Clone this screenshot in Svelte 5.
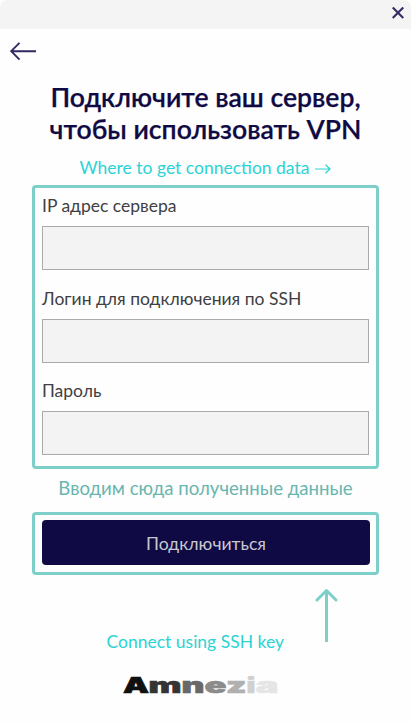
<script>
  let fields = $state([
    { id: 'ip', label: 'IP адрес сервера', type: 'text', value: '' },
    { id: 'login', label: 'Логин для подключения по SSH', type: 'text', value: '' },
    { id: 'password', label: 'Пароль', type: 'password', value: '' }
  ]);

  const brand = [
    { ch: 'A', x: 1, w: 26, color: '#101010' },
    { ch: 'm', x: 26.5, w: 33, color: '#343434' },
    { ch: 'n', x: 59.5, w: 23, color: '#686868' },
    { ch: 'e', x: 82.5, w: 22, color: '#8b8b8b' },
    { ch: 'z', x: 104, w: 20.5, color: '#b0b0b0' },
    { ch: 'i', x: 124.5, w: 9, color: '#d0d0d0' },
    { ch: 'a', x: 133.5, w: 23, color: '#e5e5e5' }
  ];
</script>

<div class="window">
  <header>
    <button class="close" aria-label="Close">
      <svg width="12" height="12" viewBox="0 0 12 12"><path d="M.7 .5 11.3 11M11.3 .5 .7 11" fill="none" stroke="#342c66" stroke-width="2.2" /></svg>
    </button>
  </header>
  <button class="back" aria-label="Back">
    <svg width="27" height="20" viewBox="0 0 27 20"><path d="M26 10.2H1.5M9.5 1.8 1.2 10.2 9.5 18.6" fill="none" stroke="#31295f" stroke-width="1.9" /></svg>
  </button>
  <h1><span>Подключите ваш сервер,</span><span>чтобы использовать VPN</span></h1>
  <a class="where" href="#help">Where to get connection data
    <svg width="16" height="10" viewBox="0 0 16 10"><path d="M0 5H15M10.5 .7 15 5 10.5 9.3" fill="none" stroke="#2bd3d4" stroke-width="1.2" /></svg>
  </a>
  <form class="frame fields">
    {#each fields as field (field.id)}
      <div class="field">
        <label for={field.id}>{field.label}</label>
        <input id={field.id} type={field.type} bind:value={field.value} />
      </div>
    {/each}
  </form>
  <p class="note">Вводим сюда полученные данные</p>
  <div class="frame action">
    <button class="connect">Подключиться</button>
  </div>
  <div class="pointer">
    <svg width="24" height="54" viewBox="0 0 24 54"><path d="M12.5 54V2" fill="none" stroke="#7dcfca" stroke-width="3" /><path d="M3 12 12.5 2.5 22 12" fill="none" stroke="#7dcfca" stroke-width="3" stroke-linecap="round" stroke-linejoin="round" /></svg>
  </div>
  <a class="ssh" href="#key">Connect using SSH key</a>
  <svg class="brand" width="156" height="20" viewBox="0 0 156 20">
    {#each brand as l}
      <text x={l.x} y="17.3" textLength={l.w} lengthAdjust="spacingAndGlyphs" fill={l.color} stroke={l.color}>{l.ch}</text>
    {/each}
  </svg>
</div>

<style>
  :global(body) { background: #fff; }
  .window { width: 411px; height: 723px; display: flex; flex-direction: column; background: #fefefe; font-family: Lato, "Noto Sans", sans-serif; overflow: hidden; }
  .window * { box-sizing: border-box; }
  button { border: 0; padding: 0; background: none; font-family: inherit; }
  svg { display: block; }
  header { height: 29px; flex: none; background: #f4f4f4; border-radius: 7px 7px 0 0; display: flex; justify-content: flex-end; padding: 7px 7px 0 0; }
  .close { height: 12px; }
  .back { margin: 12px 0 0 9.5px; width: 27px; height: 20px; }
  h1 { margin: 20px 0 0; height: 65px; font-size: 26.6px; line-height: 32px; font-weight: 600; color: #100a44; -webkit-text-stroke: .25px #100a44; display: flex; flex-direction: column; align-items: center; white-space: nowrap; }
  a { text-decoration: none; color: #2bd3d4; white-space: nowrap; }
  .where { align-self: center; margin-top: 10px; height: 24px; line-height: 24px; font-size: 17.5px; display: flex; align-items: center; gap: 6px; }
  .where svg { margin-top: 2px; }
  .frame { border: 3px solid #7dcfca; border-radius: 4px; width: 347px; margin-left: 32px; }
  .fields { margin-top: 5px; height: 284px; padding: 6px 7px 0; display: flex; flex-direction: column; }
  .field { height: 92.6px; flex: none; display: flex; flex-direction: column; }
  .field:last-child { height: 77px; }
  label { height: 32px; line-height: 24px; font-size: 17.5px; color: #404044; white-space: nowrap; }
  input { width: 327px; height: 44px; padding: 0 10px; border: 1px solid #aaa; border-radius: 0; background: #f3f3f3; font: 17px Lato, sans-serif; outline: none; }
  .note { margin: 7px 0 0; height: 24px; line-height: 24px; font-size: 18.6px; color: #69b5b0; text-align: center; white-space: nowrap; }
  .action { height: 63px; margin-top: 12px; padding: 5px 6px 0 7px; }
  .connect { display: block; width: 328px; height: 45px; padding-top: 2px; border-radius: 4px; background: #100a44; color: #c8c8d0; font-size: 17.6px; }
  .pointer { margin: 13px 0 0 314px; height: 54px; }
  .ssh { margin: -12px 0 0 106.5px; height: 24px; line-height: 24px; font-size: 17.5px; }
  .brand { margin: 22px 0 0 122px; overflow: visible; }
  .brand text { font-family: Inter, "Liberation Sans", sans-serif; font-weight: 900; font-size: 21px; stroke-width: .6; }
</style>
